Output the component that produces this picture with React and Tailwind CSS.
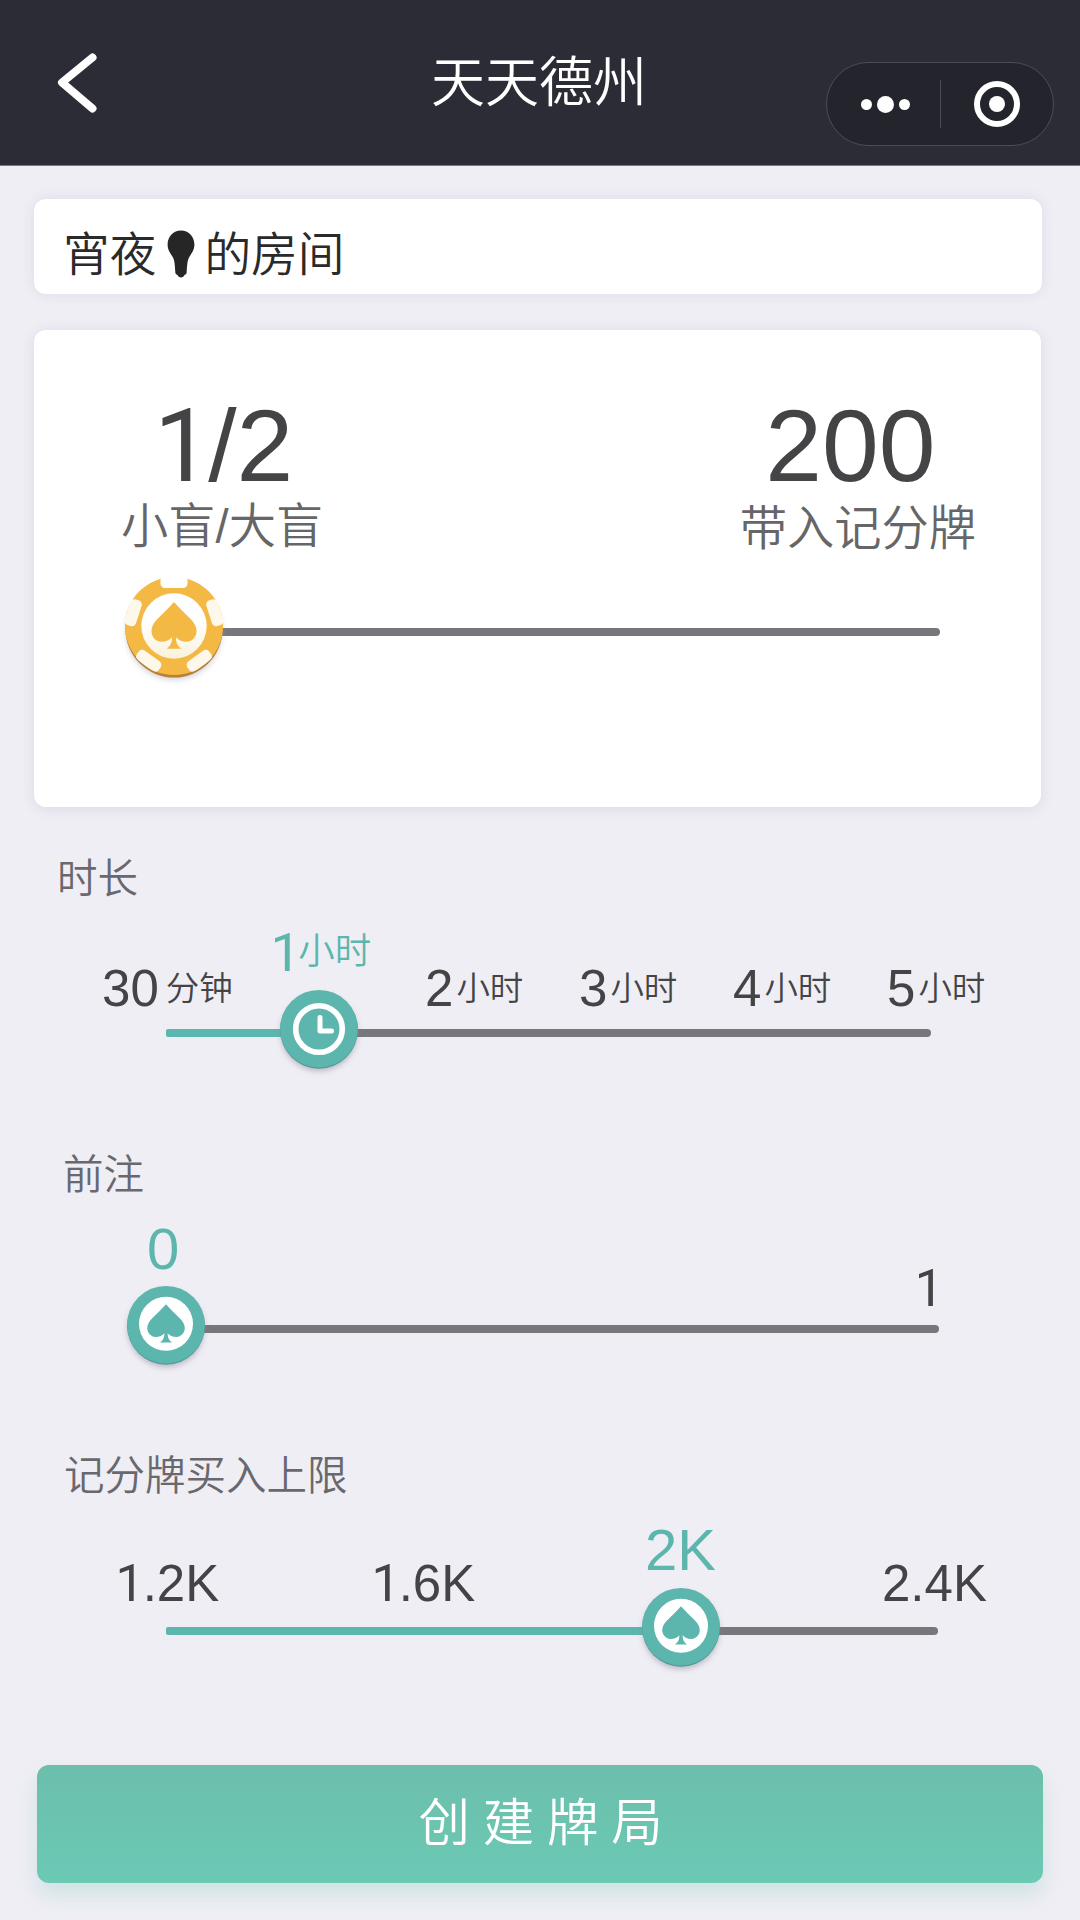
import React from 'react';
import clsx from 'clsx';

const durations = [
    { value: '30', unit: '分钟' },
    { value: '1', unit: '小时', active: true },
    { value: '2', unit: '小时' },
    { value: '3', unit: '小时' },
    { value: '4', unit: '小时' },
    { value: '5', unit: '小时' },
];

const SPADE =
    'M0 -19.3 C-4 -14.5 -9.5 -9.8 -14 -5.2 C-17 -2.2 -18.8 1 -18.8 4.5 C-18.8 9.5 -15 13.3 -10.5 13.3 C-6.5 13.3 -3.5 11.8 -1.6 9.6 C-1.6 14 -3 16.6 -6 19 L6 19 C3 16.6 1.6 14 1.6 9.6 C3.5 11.8 6.5 13.3 10.5 13.3 C15 13.3 18.8 9.5 18.8 4.5 C18.8 1 17 -2.2 14 -5.2 C9.5 -9.8 4 -14.5 0 -19.3 Z';

// Digits in Liberation Sans, but the "1" without its foot
const Num = ({ children }) =>
    children.split('').map((ch, i) => (
        <span key={i} className={clsx('font-normal', ch === '1' && "-mr-[0.03em] ml-[0.03em] font-['Roboto',sans-serif]")}>
            {ch}
        </span>
    ));

const Thumb = ({ icon }) => (
    <svg className="relative z-10 -mx-[44px] h-[88px] w-[88px] shrink-0 overflow-visible" viewBox="-44 -40 88 88">
        <circle cy="4" r="38" fill="#8b7f95" opacity="0.55" className="blur-[3px]" />
        <circle cy="0.7" r="39" fill="#4a9f96" />
        <circle cy="-0.3" r="38.8" fill="#5db6ae" />
        {icon === 'clock' ? (
            <g fill="none" stroke="#fff" strokeLinecap="round" strokeLinejoin="round">
                <circle r="23.3" strokeWidth="5.6" />
                <path d="M1 -11.5 V2 H12.5" strokeWidth="5" />
            </g>
        ) : (
            <>
                <circle cy="-1.2" r="27" fill="#fff" />
                <path d={SPADE} transform="translate(0 -1.4)" fill="#5db6ae" />
            </>
        )}
    </svg>
);

const Chip = () => (
    <svg className="relative z-10 -mx-[55px] h-[110px] w-[110px] shrink-0 overflow-visible" viewBox="-55 -49 110 110">
        <defs>
            <clipPath id="chip">
                <circle r="49.5" />
            </clipPath>
            <linearGradient id="face" x1="0" y1="0" x2="0" y2="1">
                <stop offset="0.4" stopColor="#ffffff" />
                <stop offset="1" stopColor="#f9f2dc" />
            </linearGradient>
        </defs>
        <circle cy="6" r="47" fill="#9a9ab0" opacity="0.55" className="blur-[3px]" />
        <circle cy="3" r="48.6" fill="#b9803a" />
        <circle r="49" fill="#f3b944" />
        <g clipPath="url(#chip)">
            {[0, 72, 144, 216, 288].map((deg) => (
                <rect
                    key={deg}
                    x="-13.5"
                    y={deg === 0 ? -54 : -49}
                    width="27"
                    height={deg === 0 ? 16 : 12}
                    rx="4.5"
                    fill={deg === 0 ? '#ffffff' : '#fdf8ea'}
                    transform={`rotate(${deg})`}
                />
            ))}
        </g>
        <circle r="32.7" fill="url(#face)" />
        <path d={SPADE} transform="translate(0 -0.5) scale(1.2 1.22)" fill="#f3b944" />
    </svg>
);

const Slider = ({ className, filled, children }) => (
    <div className={clsx('flex items-center', className)}>
        <div className={clsx('h-2 shrink-0 rounded-l-xs bg-[#5db6ae]', filled)} />
        {children}
        <div className="h-2 flex-1 rounded-r-[4px] bg-[#77777b]" />
    </div>
);

const SectionLabel = ({ className, children }) => (
    <h2 className={clsx('text-[40.5px] leading-none text-[#68686d]', className)}>{children}</h2>
);

const App = () => {
    return (
        <div className="flex h-[1920px] w-[1080px] flex-col overflow-hidden bg-[#efeef5] font-['Liberation_Sans','Noto_Sans_CJK_SC',sans-serif] font-[350] text-[#444446]">
            {/* Header */}
            <header className="grid h-[166px] shrink-0 grid-cols-[1fr_auto_1fr] items-start border-b border-[#77777c] bg-[#2c2c36] text-white">
                <svg className="mt-[52px] ml-[56px] h-[62px] w-[44px]" viewBox="0 0 44 62" fill="none">
                    <path d="M36.5 5.5 L6 30.5 L36.5 56.5" stroke="#fff" strokeWidth="8" strokeLinecap="round" strokeLinejoin="round" />
                </svg>
                <h1 className="mt-[56px] -ml-[2px] text-[54px] leading-none">天天德州</h1>
                <div className="mt-[62px] mr-[26px] flex h-[84px] w-[228px] items-center justify-self-end rounded-full border border-[#4c4c55] bg-[#24242d]">
                    <div className="flex w-[113px] items-center justify-center gap-[5px] pt-px pl-[4px]">
                        <span className="h-[11px] w-[11px] rounded-full bg-white" />
                        <span className="h-[17px] w-[17px] rounded-full bg-white" />
                        <span className="h-[11px] w-[11px] rounded-full bg-white" />
                    </div>
                    <div className="h-12 w-px bg-[#4c4c55]" />
                    <div className="flex flex-1 justify-center">
                        <div className="flex h-[46px] w-[46px] items-center justify-center rounded-full border-[6px] border-white">
                            <span className="h-[16px] w-[16px] rounded-full bg-white" />
                        </div>
                    </div>
                </div>
            </header>

            {/* Room name */}
            <div className="mt-[33px] ml-[34px] flex h-[95px] w-[1008px] shrink-0 items-start rounded-xl bg-white pt-[33px] pl-[29px] text-[46.7px] leading-none text-[#2a2a2a] shadow-[0_0_14px_rgba(60,50,90,0.09)]">
                <span>宵夜</span>
                <svg className="-mt-[2px] mr-[9px] ml-[11px] h-[48px] w-[28px]" viewBox="0 0 28 48">
                    <path d="M14 0.5 C21.5 0.5 27.4 6.5 27.4 14.5 C27.4 20 24.5 23.5 22.3 27 C20 31 20.2 36 19.6 43 C19.3 44.5 17.5 44.5 17 45.8 C16.2 48 11.8 48 11 45.8 C10.5 44.5 8.7 44.5 8.4 43 C7.8 36 8 31 5.7 27 C3.5 23.5 0.6 20 0.6 14.5 C0.6 6.5 6.5 0.5 14 0.5 Z" fill="#262626" />
                </svg>
                <span>的房间</span>
            </div>

            {/* Blinds */}
            <div className="mt-[36px] ml-[34px] h-[477px] w-[1007px] shrink-0 rounded-xl bg-white pt-[65px] shadow-[0_2px_14px_rgba(60,50,90,0.10)]">
                <div className="flex justify-between pr-[65px] pl-[87px]">
                    <div className="flex flex-col items-center gap-[6px]">
                        <p className="text-[102px] leading-none"><Num>1/2</Num></p>
                        <p className="text-[47.25px] leading-none text-[#666668]">小盲/大盲</p>
                    </div>
                    <div className="flex flex-col items-center gap-[8px]">
                        <p className="pr-[15px] text-[102px] leading-none">200</p>
                        <p className="text-[47.25px] leading-none text-[#666668]">带入记分牌</p>
                    </div>
                </div>
                <Slider className="mt-[25px] mr-[101px] ml-[140px]" filled="w-0">
                    <Chip />
                </Slider>
            </div>

            {/* Duration */}
            <section className="mt-[52px] shrink-0">
                <SectionLabel className="ml-[57px]">时长</SectionLabel>
                <div className="mt-[25px] ml-[102px] grid h-[89px] grid-cols-[167px_156px_154px_154px_154px_auto] items-end">
                    {durations.map(({ value, unit, active }) => (
                        <div
                            key={value}
                            className={clsx('flex items-end', active && 'self-start text-[#5db6ae]', value === '30' && 'gap-[7px]', value !== '30' && !active && 'gap-[3px]')}
                        >
                            <span className={clsx('leading-none', active ? '-mr-px text-[54px]' : 'text-[51px]')}><Num>{value}</Num></span>
                            <span className={clsx('leading-none', active ? 'mb-[9px] text-[36.5px]' : 'mb-[8px] text-[33.5px]')}>{unit}</span>
                        </div>
                    ))}
                </div>
                <Slider className="-mt-[25px] mr-[149px] ml-[166px]" filled="w-[153px]">
                    <Thumb icon="clock" />
                </Slider>
            </section>

            {/* Ante */}
            <section className="mt-[78px] shrink-0">
                <SectionLabel className="ml-[63px]">前注</SectionLabel>
                <div className="mt-[25px] mr-[138px] ml-[147px] flex h-[94px] items-end justify-between">
                    <span className="self-start text-[58px] leading-none text-[#5db6ae]">0</span>
                    <span className="text-[51px] leading-none"><Num>1</Num></span>
                </div>
                <Slider className="-mt-[29px] mr-[141px] ml-[166px]" filled="w-0">
                    <Thumb icon="spade" />
                </Slider>
            </section>

            {/* Buy-in limit */}
            <section className="mt-[83px] shrink-0">
                <SectionLabel className="ml-[64px]">记分牌买入上限</SectionLabel>
                <div className="mt-[24px] ml-[114px] grid h-[88px] grid-cols-[256px_275px_237px_auto] items-end text-[51px] leading-none">
                    <span><Num>1.2K</Num></span>
                    <span><Num>1.6K</Num></span>
                    <span className="self-start text-[58px] text-[#5db6ae]">2K</span>
                    <span>2.4K</span>
                </div>
                <Slider className="-mt-[22px] mr-[142px] ml-[166px]" filled="w-[515px]">
                    <Thumb icon="spade" />
                </Slider>
            </section>

            <button className="mt-[90px] ml-[37px] h-[118px] w-[1006px] shrink-0 rounded-xl bg-linear-to-b from-[#6bbfac] to-[#6bc9b4] pl-[14px] text-[51.5px] leading-none tracking-[12.8px] text-white shadow-[0_12px_20px_rgba(100,190,170,0.22)]">
                创建牌局
            </button>
        </div>
    );
};

export default App;
